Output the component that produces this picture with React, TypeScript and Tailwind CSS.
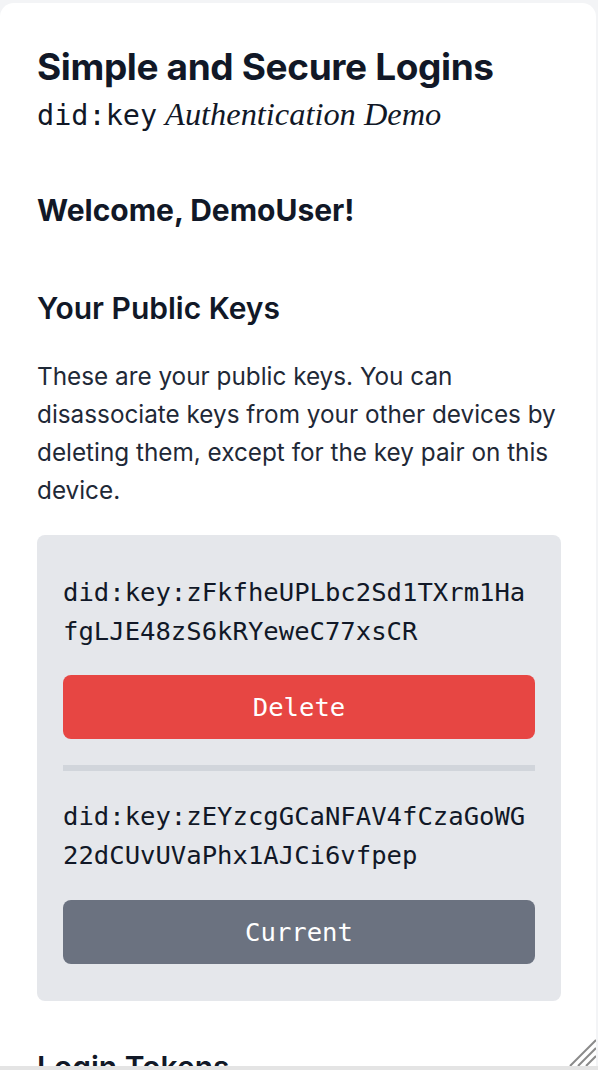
import React from "react";

const sans = { fontFamily: "Inter, 'Noto Sans', sans-serif" };
const mono = { fontFamily: "'DejaVu Sans Mono', monospace" };

function KeyItem({ id, current }: { id: string; current?: boolean }) {
  return (
    <div className="flex flex-col">
      <div className="text-[25.6px] leading-[39px] text-[#111827] break-all" style={mono}>
        {id}
      </div>
      <button
        className={
          "h-[64px] w-full rounded-lg text-white text-[25.6px] " +
          (current ? "mt-[25px] bg-[#6b7280]" : "mt-[24px] bg-[#e74643]")
        }
        style={mono}
      >
        {current ? "Current" : "Delete"}
      </button>
    </div>
  );
}

export default function App() {
  return (
    <div className="h-[1070px] w-[598px] flex flex-col bg-[#f3f4f6] overflow-hidden" style={sans}>
      <div className="h-[3px] shrink-0" />
      <div className="relative flex-1 mr-[2px] bg-white rounded-t-[14px] overflow-hidden">
        <div className="pl-[37px] pr-[35px] pt-[41px] text-[#111827]">
          <h1 className="text-[37px] leading-[46px] font-bold tracking-[-0.01em]">
            Simple and Secure Logins
          </h1>
          <div className="mt-[4px] flex items-baseline gap-[8px] text-[28.5px] leading-[40px]">
            <span style={mono}>did:key</span>
            <span className="italic text-[32.4px]" style={{ fontFamily: "'Liberation Serif', serif" }}>
              Authentication Demo
            </span>
          </div>
          <h2 className="mt-[55px] text-[30px] leading-[38px] font-bold">Welcome, DemoUser!</h2>
          <h2 className="mt-[60px] text-[30px] leading-[38px] font-semibold">Your Public Keys</h2>
          <p className="mt-[30px] text-[24.3px] leading-[38px] text-[#1f2937]">
            These are your public keys. You can disassociate keys from your other devices by
            deleting them, except for the key pair on this device.
          </p>
          <div className="mt-[26px] rounded-lg bg-[#e5e7eb] px-[26px] pt-[38px] pb-[37px] flex flex-col">
            <KeyItem id="did:key:zFkfheUPLbc2Sd1TXrm1HafgLJE48zS6kRYeweC77xsCR" />
            <div className="mt-[26px] mb-[26px] h-[6px] bg-[#d1d5db]" />
            <KeyItem id="did:key:zEYzcgGCaNFAV4fCzaGoWG22dCUvUVaPhx1AJCi6vfpep" current />
          </div>
          <h2 className="mt-[47px] text-[30px] leading-[38px] font-semibold">Login Tokens</h2>
        </div>
        <svg className="absolute right-0 bottom-0" width="28" height="28" viewBox="0 0 28 28">
          <line x1="2" y1="28" x2="28" y2="2" stroke="#8a8a8a" strokeWidth="2" />
          <line x1="10" y1="28" x2="28" y2="10" stroke="#8a8a8a" strokeWidth="2" />
          <line x1="18" y1="28" x2="28" y2="18" stroke="#8a8a8a" strokeWidth="2" />
        </svg>
      </div>
      <div className="h-[4px] shrink-0 bg-[#e4e4e4]" />
    </div>
  );
}
